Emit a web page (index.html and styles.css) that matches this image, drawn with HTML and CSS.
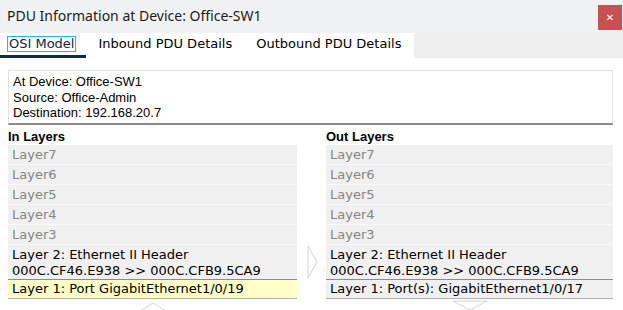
FILE: index.html
```html
<!DOCTYPE html>
<html lang="en">
<head>
    <meta charset="UTF-8">
    <title>PDU Information at Device: Office-SW1</title>
    <link rel="stylesheet" href="styles.css">
</head>
<body>
    <div class="titlebar">
        <span class="title">PDU Information at Device: Office-SW1</span>
        <div class="close">&#x2715;</div>
    </div>

    <div class="tabs">
        <div class="tab active"><span class="focus">OSI Model</span></div>
        <div class="tab">Inbound PDU Details</div>
        <div class="tab">Outbound PDU Details</div>
    </div>

    <div class="content">
        <div class="info">
            <div>At Device: Office-SW1</div>
            <div>Source: Office-Admin</div>
            <div>Destination: 192.168.20.7</div>
        </div>

        <div class="columns">
            <div class="col">
                <div class="col-title">In Layers</div>
                <div class="layers">
                    <div class="layer off">Layer7</div>
                    <div class="layer off">Layer6</div>
                    <div class="layer off">Layer5</div>
                    <div class="layer off">Layer4</div>
                    <div class="layer off">Layer3</div>
                    <div class="layer l2">Layer 2: Ethernet II Header<br>000C.CF46.E938 &gt;&gt; 000C.CFB9.5CA9</div>
                    <div class="layer l1 selected">Layer 1: Port GigabitEthernet1/0/19</div>
                </div>
                <div class="nav up">
                    <svg width="34" height="12" viewBox="0 0 34 12"><polygon points="1,11 17,1 33,11" fill="#fff" stroke="#d4d4d4"/></svg>
                </div>
            </div>

            <div class="mid">
                <svg width="12" height="34" viewBox="0 0 12 34"><polygon points="1,1 10,17 1,33" fill="#fff" stroke="#d4d4d4"/></svg>
            </div>

            <div class="col">
                <div class="col-title">Out Layers</div>
                <div class="layers">
                    <div class="layer off">Layer7</div>
                    <div class="layer off">Layer6</div>
                    <div class="layer off">Layer5</div>
                    <div class="layer off">Layer4</div>
                    <div class="layer off">Layer3</div>
                    <div class="layer l2">Layer 2: Ethernet II Header<br>000C.CF46.E938 &gt;&gt; 000C.CFB9.5CA9</div>
                    <div class="layer l1">Layer 1: Port(s): GigabitEthernet1/0/17</div>
                </div>
                <div class="nav down">
                    <svg width="36" height="12" viewBox="0 0 36 12"><polygon points="1,1 18,10 35,1" fill="#fff" stroke="#d4d4d4"/></svg>
                </div>
            </div>
        </div>
    </div>
</body>
</html>
```

FILE: styles.css
```css
html, body {
    margin: 0;
    padding: 0;
    height: 100%;
    overflow: hidden;
    background-color: #fff;
}

body {
    font-family: "DejaVu Sans", Verdana, sans-serif;
    font-size: 13px;
    color: #000;
}

.titlebar {
    height: 33px;
    background-color: #f0f1f2;
    display: flex;
    align-items: center;
    justify-content: space-between;
    padding-left: 7px;
}

.title {
    font-family: "Noto Sans", "Segoe UI", sans-serif;
    font-size: 14px;
    color: #1b1b1b;
    margin-top: -2px;
}

.close {
    width: 24px;
    height: 25px;
    margin-right: 1px;
    margin-top: 1px;
    background-color: #c75050;
    color: #fff;
    font-size: 10px;
    font-weight: bold;
    display: flex;
    align-items: center;
    justify-content: center;
}

.tabs {
    height: 25px;
    background-color: #efefef;
    display: flex;
}

.tab {
    background-color: #fff;
    padding: 3px 12px 0 12px;
    font-size: 13px;
    color: #000;
}

.tab:last-child {
    padding-right: 13px;
}

.tab.active {
    padding: 3px 10px 0 7px;
    border-bottom: 3px solid #0f2b50;
    height: 19px;
}

.focus {
    display: inline-block;
    border: 1px solid #18c0e0;
    padding: 0 1px;
    line-height: 14px;
    color: #15214d;
}

.content {
    padding: 12px 10px 0 8px;
}

.info {
    font-family: "Liberation Sans", Arial, sans-serif;
    font-size: 13px;
    line-height: 15.5px;
    padding: 3px 4px 3px 4px;
    border: 1px solid #e2e2e2;
    border-bottom: 2px solid #8a8a8a;
    height: 46px;
}

.columns {
    display: grid;
    grid-template-columns: 289px 29px 287px;
    margin-top: 4px;
}

.col-title {
    font-family: "Liberation Sans", Arial, sans-serif;
    font-weight: bold;
    font-size: 13px;
    line-height: 16px;
}

.layers {
    background-color: #f8f8f8;
}

.layer {
    background-color: #f0f0f0;
    height: 19px;
    line-height: 19px;
    padding-left: 4px;
    margin-bottom: 1px;
    white-space: nowrap;
}

.layer.off {
    color: #858585;
}

.layer.l2 {
    height: 32px;
    line-height: 16px;
    padding-top: 2px;
    margin-bottom: 0;
    border-bottom: 1px solid #8c8c8c;
}

.layer.l1 {
    border-bottom: 1px solid #b0b0b0;
    height: 18px;
    line-height: 18px;
}

.layer.selected {
    background-color: #ffffc8;
}

.mid {
    padding-top: 116px;
    padding-left: 10px;
}

.nav {
    display: flex;
    justify-content: center;
}

.nav.up {
    padding-top: 2px;
}

.nav.down {
    padding-top: 0;
}
```
